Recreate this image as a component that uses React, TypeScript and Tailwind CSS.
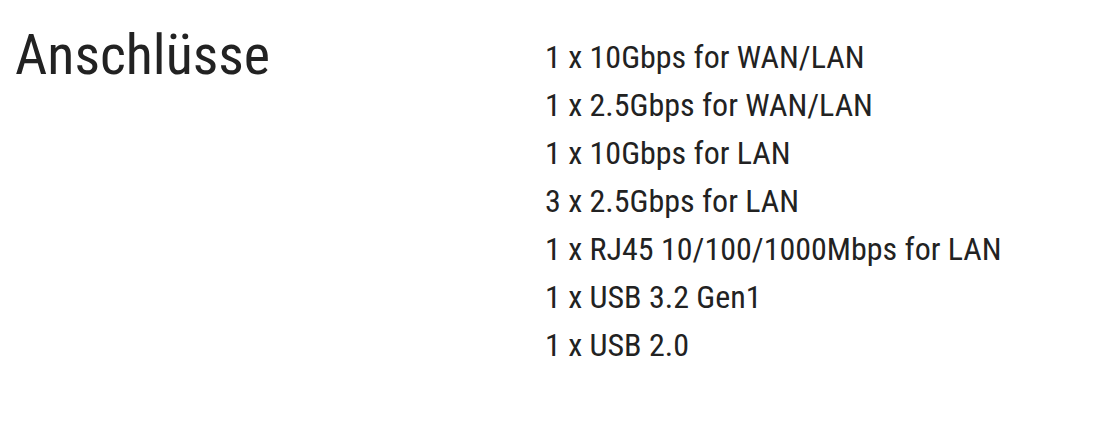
import React from 'react';

const PORTS = [
  '1 x 10Gbps for WAN/LAN',
  '1 x 2.5Gbps for WAN/LAN',
  '1 x 10Gbps for LAN',
  '3 x 2.5Gbps for LAN',
  '1 x RJ45 10/100/1000Mbps for LAN',
  '1 x USB 3.2 Gen1',
  '1 x USB 2.0',
];

const App: React.FC = () => {
  return (
    <div
      className="flex min-h-[425px] bg-white px-[15px] pt-[20px] text-[#222222] [font-stretch:condensed]"
      style={{ fontFamily: '"Roboto Condensed", Roboto, sans-serif' }}
    >
      <h2 className="w-[530px] shrink-0 text-[56px] leading-[70px] font-normal">Anschlüsse</h2>
      <ul className="pt-[13px]">
        {PORTS.map(p => (
          <li key={p} className="text-[32px] leading-[48px]">{p}</li>
        ))}
      </ul>
    </div>
  );
};

export default App;
